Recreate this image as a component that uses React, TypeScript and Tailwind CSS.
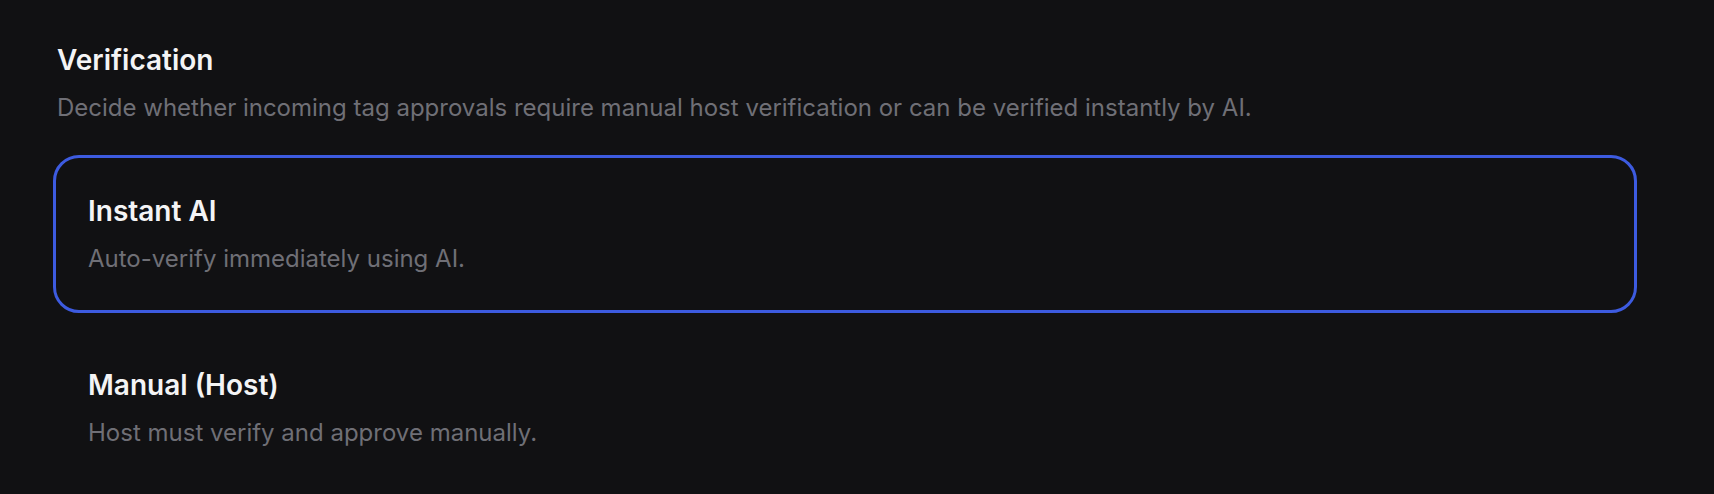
import { useState } from 'react';

type Mode = 'instant' | 'manual';

const options: { id: Mode; title: string; description: string }[] = [
    { id: 'instant', title: 'Instant AI', description: 'Auto-verify immediately using AI.' },
    { id: 'manual', title: 'Manual (Host)', description: 'Host must verify and approve manually.' },
];

export default function App() {
    const [mode, setMode] = useState<Mode>('instant');

    return (
        <div
            className="min-h-screen bg-[#111113] pl-[53px] pt-[42px]"
            style={{ fontFamily: 'Inter, "Noto Sans", sans-serif' }}
        >
            <div className="pl-[4px]">
                <h2 className="text-[28px] leading-[36px] font-semibold text-[#f4f4f5]">
                    Verification
                </h2>
                <p className="mt-[14px] text-[24px] leading-[32px] text-[#6f6f76]">
                    Decide whether incoming tag approvals require manual host verification or can be verified instantly by AI.
                </p>
            </div>

            <div className="mt-[31px] flex w-[1584px] flex-col gap-[16px]">
                {options.map((opt) => {
                    const active = opt.id === mode;
                    return (
                        <button
                            key={opt.id}
                            type="button"
                            onClick={() => setMode(opt.id)}
                            className={`rounded-[26px] border-[3px] px-[32px] py-[35px] text-left ${
                                active ? 'border-[#3d5be0]' : 'border-transparent'
                            }`}
                        >
                            <div className="text-[28px] leading-[36px] font-semibold text-[#f4f4f5]">
                                {opt.title}
                            </div>
                            <div className="mt-[14px] text-[24px] leading-[32px] text-[#6f6f76]">
                                {opt.description}
                            </div>
                        </button>
                    );
                })}
            </div>
        </div>
    );
}
